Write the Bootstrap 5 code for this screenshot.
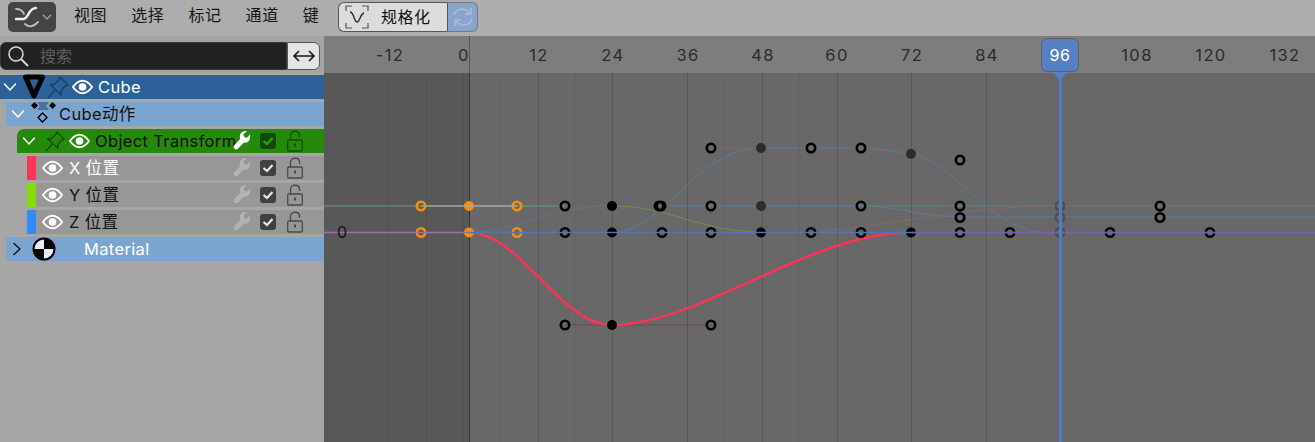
<!DOCTYPE html>
<html lang="zh">
<head>
  <meta charset="UTF-8">
  <title>曲线编辑器</title>
  <link href="https://cdn.jsdelivr.net/npm/bootstrap@5.3.0/dist/css/bootstrap.min.css" rel="stylesheet">
  <style>
    html, body { height: 100%; }
    body { background: #a6a6a6; overflow: hidden; font-family: Inter, "Noto Sans CJK SC", sans-serif; font-size: 16px; color: #111; }
    svg { display: block; flex: none; }
    .app { width: 1315px; height: 442px; }
    .topbar { height: 36px; background: #adadad; padding: 2px 0 0 8px; }
    .editor-btn { width: 48px; height: 30px; background: #444; border-radius: 5px; }
    .menu-list { margin-left: 18px; width: 264px; gap: 24px; }
    .menu-list span { color: #161616; letter-spacing: .6px; }
    .norm-btn { width: 109px; height: 30px; background: #dcdcdc; border: 1px solid #555; border-right: 0; border-radius: 6px 0 0 6px; padding-left: 6px; }
    .norm-btn span { margin-left: 12px; letter-spacing: .5px; }
    .sync-btn { width: 31px; height: 30px; background: #8aa5cb; border: 1px solid #777; border-left: 1px solid #555; border-radius: 0 6px 6px 0; }
    .side { width: 324px; }
    .search-row { height: 39px; padding: 6px 4px 0 0; }
    .search-box { width: 287px; height: 28px; background: #222; border-radius: 6px 0 0 6px; border: 1px solid #3a3a3a; padding-left: 6px; color: #5e5e5e; gap: 11px; }
    .swap-btn { width: 33px; height: 28px; background: #e4e4e4; border: 1px solid #555; border-radius: 0 6px 6px 0; }
    .chan { height: 24px; margin-bottom: 3px; white-space: nowrap; font-size: 16.5px; letter-spacing: .35px; }
    .chan-object { background: #2c6299; color: #fff; }
    .chan-action { margin-left: 6px; background: #7ba5cf; }
    .chan-group { margin-left: 17px; background: #258a0c; border-radius: 7px 0 0 0; --tick: #2fa512; }
    .chan-fcurve { margin-left: 27px; background: #979797; --tick: #e8e8e8; }
    .chan-mat { margin-left: 6px; background: #7ba5cf; color: #fff; }
    .swatch { width: 9px; height: 24px; }
    .swatch-x { background: #fb3355; }
    .swatch-y { background: #86de00; }
    .swatch-z { background: #2d8dff; }
    .chan-text { flex: 1 1 0; min-width: 0; }
    .tools { width: 91px; }
    .tool-wrench { color: #b3b3b3; }
    .tool-check { color: #404040; margin-left: 9px; }
    .tool-lock { color: #4a4a4a; margin-left: 11px; }
    .chan-group .tool-wrench { color: #fff; }
    .chan-group .tool-check { color: #124a06; }
    .chan-group .tool-lock { color: #145006; }
    .pin-object { color: #1b3f66; }
    .pin-group { color: #145006; margin-left: 8px; }
    .chev { margin-left: 5px; }
    .chev-object { margin-left: 3px; }
    .ic-object { margin-left: 5px; }
    .ic-action { margin-left: 6px; }
    .txt-action { margin-left: 2px; }
    .eye-object { margin-left: 2px; }
    .txt-object { margin-left: 5px; }
    .eye-group { margin-left: 3px; }
    .txt-group { margin-left: 5px; }
    .eye-fcurve { margin-left: 6px; }
    .txt-fcurve { margin-left: 6px; }
    .chev-mat { margin-left: 4px; }
    .ic-mat { margin-left: 8px; }
    .txt-mat { margin-left: 28px; }
    .main { width: 991px; }
    .ruler { height: 37px; background: #7d7d7d; }
    .ruler text { font: 16.5px Inter, sans-serif; fill: #2b2b2b; text-anchor: middle; letter-spacing: 1.4px; }
    .head { left: 1041px; top: 38px; width: 38px; height: 34px; background: #5680c2; border: 1px solid #5f5f5f; border-radius: 6px; color: #fff; letter-spacing: .6px; }
    .head-tip { left: 1053px; top: 70px; width: 14px; height: 14px; }
    .head-line { left: 1059px; top: 78px; width: 3px; height: 364px; background: #4f7cc2; }
    .zero-label { font: 16px Inter, sans-serif; fill: #111; }
  </style>
</head>
<body>
<!-- icons -->
<svg width="0" height="0" class="position-absolute">
  <defs>
    <symbol id="i-eye" viewBox="0 0 22 16"><path d="M1 8C4.500 3 8 1.500 11 1.500S17.500 3 21 8C17.500 13 14 14.500 11 14.500S4.500 13 1 8Z" fill="none" stroke="currentColor" stroke-width="2"/><circle cx="11" cy="8" r="4" fill="currentColor"/></symbol>
    <symbol id="i-pin" viewBox="0 0 24 24"><path d="M14 2L22 10L19 11L15 16L15 20L4 9.500L8 9.500L13 5ZM9 15L2 23" fill="none" stroke="currentColor" stroke-width="1.500" stroke-linejoin="round"/></symbol>
    <symbol id="i-wrench" viewBox="0 0 18 20"><path d="M17 3.500L13.500 7L11 5.500L10.500 3L14 .5C10.500-.5 7 1.500 6.800 5C6.700 6.500 7 7.200 7.200 8L1 14.500C-.5 16.500 2.500 19.500 4.500 18L11 11.500C14.500 12.500 18 9.500 17 3.500Z" fill="currentColor"/></symbol>
    <symbol id="i-check" viewBox="0 0 16 16"><rect width="16" height="16" rx="3" fill="currentColor"/><path d="M3.500 8L7 11L12.500 5" fill="none" stroke="var(--tick)" stroke-width="2.200"/></symbol>
    <symbol id="i-lock" viewBox="0 0 16 22"><path d="M3.500 10V5C3.500 0 12.500 0 12.500 5V7" fill="none" stroke="currentColor" stroke-width="1.300"/><rect x=".7" y="10" width="14.600" height="11" rx="1" fill="none" stroke="currentColor" stroke-width="1.300"/><rect x="7" y="13.500" width="2" height="3" fill="currentColor"/></symbol>
    <symbol id="i-down" viewBox="0 0 14 14"><path d="M1.500 4L7 10L12.500 4" fill="none" stroke="currentColor" stroke-width="1.400" stroke-linecap="round" stroke-linejoin="round"/></symbol>
  </defs>
</svg>

<div class="app d-flex flex-column position-relative">
  <div class="topbar d-flex align-items-start">
    <div class="editor-btn d-flex align-items-center justify-content-center">
      <svg width="42" height="26" viewBox="0 0 42 26"><path d="M5 15H12C18 15 17 4 25 4" fill="none" stroke="#eee" stroke-width="2.400" stroke-linecap="round"/><path d="M5 5C9 5 12 7 13 10" fill="none" stroke="#bdbdbd" stroke-width="1.800" stroke-linecap="round"/><path d="M14 20C18 24 22 23 27 18" fill="none" stroke="#bdbdbd" stroke-width="1.800" stroke-linecap="round"/><path d="M32 11L36 15L40 11" fill="none" stroke="#aaa" stroke-width="1.200"/></svg>
    </div>
    <div class="menu-list d-flex align-items-center h-75">
      <span>视图</span><span>选择</span><span>标记</span><span>通道</span><span>键</span>
    </div>
    <div class="norm-btn d-flex align-items-center">
      <svg width="24" height="24" viewBox="0 0 24 24"><path d="M1 6V1H7M17 1H23V6M1 18V23H7M17 23H23V18" fill="none" stroke="#555" stroke-width="1.200"/><path d="M5 7C9 7 9 17 12 17C15 17 15 9 19 8" fill="none" stroke="#222" stroke-width="1.300"/></svg>
      <span>规格化</span>
    </div>
    <div class="sync-btn d-flex align-items-center justify-content-center">
      <svg width="24" height="24" viewBox="0 0 24 24"><path d="M3 10C5 3 14 2 19 8M21 14C19 21 10 22 5 16" fill="none" stroke="#a9bedc" stroke-width="1.500"/><path d="M20 3V9H14M4 21V15H10" fill="none" stroke="#a9bedc" stroke-width="1.500"/></svg>
    </div>
  </div>

  <div class="d-flex flex-grow-1">
    <div class="side">
      <div class="search-row d-flex">
        <div class="search-box d-flex align-items-center">
          <svg width="22" height="22" viewBox="0 0 22 22"><circle cx="9" cy="9" r="7" fill="none" stroke="#d8d8d8" stroke-width="1.500"/><path d="M14 14L21 21" stroke="#d8d8d8" stroke-width="2"/></svg>
          <span>搜索</span>
        </div>
        <div class="swap-btn d-flex align-items-center justify-content-center">
          <svg width="24" height="14" viewBox="0 0 24 14"><path d="M2 7H22M7 2L2 7L7 12M17 2L22 7L17 12" fill="none" stroke="#111" stroke-width="1.500"/></svg>
        </div>
      </div>

      <div class="chan chan-object d-flex align-items-center">
        <svg class="chev-object text-white" width="14" height="14"><use href="#i-down"/></svg>
        <svg class="ic-object" width="24" height="28" viewBox="0 0 24 28"><path d="M3.500 4H20.500L12 23Z" fill="none" stroke="#000" stroke-width="5" stroke-linejoin="round"/></svg>
        <svg class="pin-object" width="24" height="24"><use href="#i-pin"/></svg>
        <svg class="eye-object text-white" width="21" height="16"><use href="#i-eye"/></svg>
        <span class="txt-object chan-text">Cube</span>
      </div>

      <div class="chan chan-action d-flex align-items-center">
        <svg class="chev text-white" width="14" height="14"><use href="#i-down"/></svg>
        <svg class="ic-action" width="26" height="24" viewBox="0 0 26 24"><path d="M6 0H18L15 4L18 8H6L9 4Z" fill="#4a6f99"/><path d="M3.500 0L7 3.500L3.500 7L0 3.500ZM21.500 0L25 3.500L21.500 7L18 3.500Z" fill="#000"/><path d="M11.500 11L16 15.500L11.500 20L7 15.500Z" fill="none" stroke="#000" stroke-width="1.300"/></svg>
        <span class="txt-action chan-text">Cube动作</span>
      </div>

      <div class="chan chan-group d-flex align-items-center">
        <svg class="chev text-white" width="14" height="14"><use href="#i-down"/></svg>
        <svg class="pin-group" width="22" height="22"><use href="#i-pin"/></svg>
        <svg class="eye-group text-white" width="21" height="16"><use href="#i-eye"/></svg>
        <span class="txt-group chan-text">Object Transform</span>
        <div class="tools d-flex align-items-center">
          <svg class="tool-wrench" width="18" height="20"><use href="#i-wrench"/></svg>
          <svg class="tool-check" width="16" height="16"><use href="#i-check"/></svg>
          <svg class="tool-lock" width="16" height="22"><use href="#i-lock"/></svg>
        </div>
      </div>

      <div class="chan chan-fcurve d-flex align-items-center">
        <div class="swatch swatch-x"></div>
        <svg class="eye-fcurve text-white" width="21" height="16"><use href="#i-eye"/></svg>
        <span class="txt-fcurve chan-text text-white">X 位置</span>
        <div class="tools d-flex align-items-center">
          <svg class="tool-wrench" width="18" height="20"><use href="#i-wrench"/></svg>
          <svg class="tool-check" width="16" height="16"><use href="#i-check"/></svg>
          <svg class="tool-lock" width="16" height="22"><use href="#i-lock"/></svg>
        </div>
      </div>

      <div class="chan chan-fcurve d-flex align-items-center">
        <div class="swatch swatch-y"></div>
        <svg class="eye-fcurve text-white" width="21" height="16"><use href="#i-eye"/></svg>
        <span class="txt-fcurve chan-text">Y 位置</span>
        <div class="tools d-flex align-items-center">
          <svg class="tool-wrench" width="18" height="20"><use href="#i-wrench"/></svg>
          <svg class="tool-check" width="16" height="16"><use href="#i-check"/></svg>
          <svg class="tool-lock" width="16" height="22"><use href="#i-lock"/></svg>
        </div>
      </div>

      <div class="chan chan-fcurve d-flex align-items-center">
        <div class="swatch swatch-z"></div>
        <svg class="eye-fcurve text-white" width="21" height="16"><use href="#i-eye"/></svg>
        <span class="txt-fcurve chan-text">Z 位置</span>
        <div class="tools d-flex align-items-center">
          <svg class="tool-wrench" width="18" height="20"><use href="#i-wrench"/></svg>
          <svg class="tool-check" width="16" height="16"><use href="#i-check"/></svg>
          <svg class="tool-lock" width="16" height="22"><use href="#i-lock"/></svg>
        </div>
      </div>

      <div class="chan chan-mat d-flex align-items-center">
        <svg class="chev-mat" width="14" height="14" viewBox="0 0 14 14"><path d="M4 1.500L10 7L4 12.500" fill="none" stroke="#111" stroke-width="1.400" stroke-linecap="round" stroke-linejoin="round"/></svg>
        <svg class="ic-mat" width="24" height="24" viewBox="0 0 24 24"><circle cx="12" cy="12" r="10.500" fill="#e6eef6" stroke="#000" stroke-width="2"/><path d="M12 1A11 11 0 0 1 23 12H12ZM12 12V23A11 11 0 0 1 1 12Z" fill="#000"/></svg>
        <span class="txt-mat chan-text">Material</span>
      </div>
    </div>

    <div class="main d-flex flex-column">
      <div class="ruler">
        <svg width="991" height="37" viewBox="324 36 991 37">
          <text x="390" y="61">-12</text><text x="464" y="61">0</text><text x="539" y="61">12</text><text x="613" y="61">24</text><text x="688" y="61">36</text><text x="763" y="61">48</text><text x="837" y="61">60</text><text x="912" y="61">72</text><text x="987" y="61">84</text><text x="1137" y="61">108</text><text x="1211" y="61">120</text><text x="1285" y="61">132</text>
          <path d="M469.500 36V73" stroke="#555" stroke-width="1"/>
        </svg>
      </div>
      <svg id="graph" width="991" height="369" viewBox="324 73 991 369"></svg>
    </div>
  </div>

  <!-- playhead -->
  <div class="head-line position-absolute"></div>
  <svg class="head-tip position-absolute" viewBox="0 0 14 14"><path d="M0 2H14L8.500 9H5.500Z" fill="#5680c2"/></svg>
  <div class="head position-absolute d-flex align-items-center justify-content-center">96</div>
</div>

<script src="https://cdn.jsdelivr.net/npm/bootstrap@5.3.0/dist/js/bootstrap.bundle.min.js"></script>
<script>
  // graph drawn from data, coordinates are screen pixels
  const svg = document.getElementById('graph');
  let out = '<rect x="324" y="73" width="991" height="369" fill="#686868"/>';
  out += '<rect x="324" y="73" width="145" height="369" fill="#585858"/>';

  // grid, lines are fainter left of the start frame
  const step = 74.7;
  for (let i = -2; i < 15; i++) {
    const x = Math.round(463 + i * step / 2) + .5;
    if (x < 324) continue;
    const op = x < 469 ? .06 : (i % 2 ? .04 : .14);
    out += `<path d="M${x} 73V442" stroke="#000" stroke-opacity="${op}"/>`;
  }
  out += '<path d="M469.500 73V442" stroke="#333"/>';

  function line(d, color, w) {
    out += `<path d="${d}" fill="none" stroke="${color}" stroke-width="${w}"/>`;
  }

  // thin curves
  line('M324 206H421', '#6f9a6f', 1);
  line('M517 206H565', '#6f9a6f', 1);
  line('M565 206H612', '#7a6670', 1);
  line('M612 206C670 206 700 232 761 232', '#7c8a4c', 1);
  line('M469 232.500C520 232 550 206 612 206', '#5c7590', 1);
  line('M612 232.500C665 232 695 148 761 148C800 148 830 148 861 148C880 148 895 151 911 154C955 160 990 232 1045 232.500', '#587c9c', 1);
  line('M661 206H861C900 206 920 217 960 217H1315', '#5f7c9c', 1);
  line('M861 206H1060', '#5f8088', 1);
  line('M811 232C900 225 960 206 1060 206H1315', '#806a72', 1);
  line('M711 148H761M861 148L911 154L960 160', '#7a6670', 1);
  line('M565 325H711', '#7f3f50', 1);

  // main red curve
  line('M469 232.500C520 232 560 325 612 325C700 325 810 232 911 232.500', '#fb3355', 2.500);

  // keyframes
  const hollow = (x, y, c, o) => out += `<circle cx="${x}" cy="${y}" r="4.200" fill="none" stroke="${c}" stroke-width="2.600" opacity="${o || 1}"/>`;
  const solid = (x, y, c, o) => out += `<circle cx="${x}" cy="${y}" r="5" fill="${c}" opacity="${o || 1}"/>`;
  const orange = '#ff8c00';

  [[421, 206], [517, 206], [421, 232.5], [517, 232.5]].forEach(p => hollow(p[0], p[1], orange));
  [[469, 206], [469, 232.5]].forEach(p => solid(p[0], p[1], orange));

  [[565, 206], [661, 206], [711, 206], [861, 206], [960, 206], [1160, 206],
   [960, 217.5], [1160, 217.5],
   [565, 232.5], [662, 232.5], [711, 232.5], [811, 232.5], [861, 232.5], [960, 232.5], [1010, 232.5], [1110, 232.5], [1210, 232.5],
   [711, 148], [811, 148], [861, 148], [960, 160],
   [565, 325], [711, 325]].forEach(p => hollow(p[0], p[1], '#000'));
  hollow(659, 206, '#000');

  [[612, 206], [612, 232.5], [761, 232.5], [911, 232.5], [612, 325]].forEach(p => solid(p[0], p[1], '#000'));
  [[761, 148], [911, 154], [761, 206]].forEach(p => solid(p[0], p[1], '#2c2c2c'));
  [[1060, 206], [1060, 217.5], [1060, 232.5]].forEach(p => hollow(p[0], p[1], '#333', .5));

  // flat lines run over the keys
  line('M421 206H517', '#a8a89a', 1.500);
  line('M324 232.500H469', '#9a6cb4', 1.500);
  line('M469 232.500H1315', '#4f74b8', 1.500);
  line('M911 232.500H1315', '#7f5cae', 1.500);

  out += '<text class="zero-label" x="337" y="238">0</text>';
  svg.innerHTML = out;
</script>
</body>
</html>
